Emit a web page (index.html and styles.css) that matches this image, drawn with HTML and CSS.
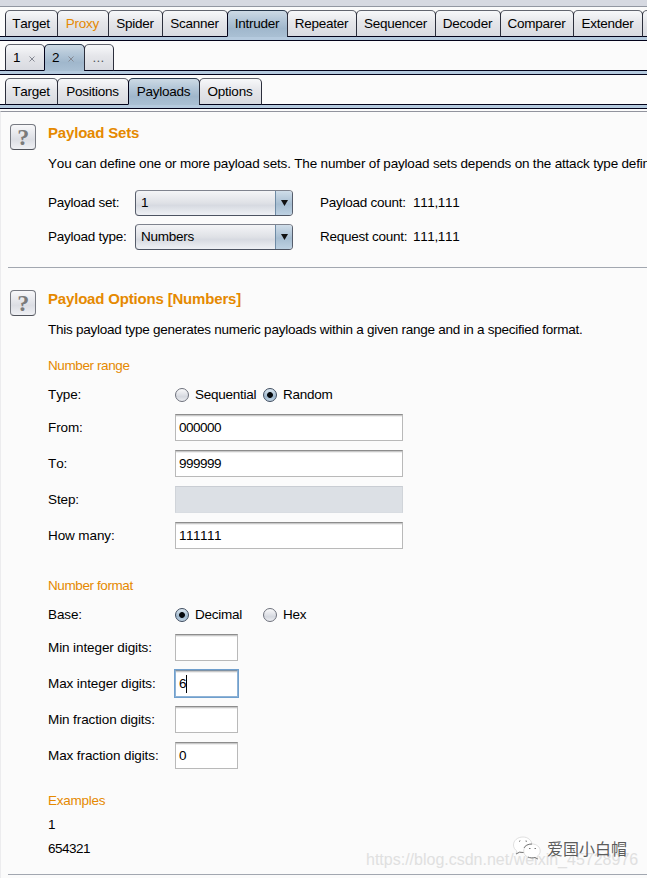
FILE: index.html
```html
<!DOCTYPE html>
<html lang="en">
<head>
<meta charset="utf-8">
<title>Intruder - Payloads</title>
<link rel="stylesheet" href="styles.css">
</head>
<body>
<div class="window">
  <div class="topbar"></div>
  <nav class="strip">
    <span class="tab w53">Target</span><span class="tab w52 orange">Proxy</span><span class="tab w55">Spider</span><span class="tab w66">Scanner</span><span class="tab w61 selected">Intruder</span><span class="tab w70">Repeater</span><span class="tab w80">Sequencer</span><span class="tab w66">Decoder</span><span class="tab w74">Comparer</span><span class="tab w70">Extender</span><span class="tab w70"></span>
  </nav>
  <div class="band"></div>
  <nav class="strip">
    <span class="tab w40 closable">1<svg class="close" viewBox="0 0 6 6"><path d="M.5 .5l5 5M5.5 .5l-5 5"/></svg></span><span class="tab w41 closable selected">2<svg class="close" viewBox="0 0 6 6"><path d="M.5 .5l5 5M5.5 .5l-5 5"/></svg></span><span class="tab w30 dots">...</span>
  </nav>
  <div class="band"></div>
  <nav class="strip">
    <span class="tab w53">Target</span><span class="tab w72">Positions</span><span class="tab w72 selected">Payloads</span><span class="tab w63">Options</span>
  </nav>
  <div class="band"></div>

  <main class="panel">
    <section class="section sets">
      <div class="help"><span>?</span></div>
      <div class="content">
        <h2>Payload Sets</h2>
        <p class="desc wide">You can define one or more payload sets. The number of payload sets depends on the attack type define</p>
        <div class="setrow">
          <label>Payload set:</label>
          <div class="combo"><span class="value">1</span><span class="arrow"><svg viewBox="0 0 7 6"><path d="M0 0h7L3.500 6z"/></svg></span></div>
          <span class="count">Payload count:</span><span class="total">111,111</span>
        </div>
        <div class="setrow">
          <label>Payload type:</label>
          <div class="combo"><span class="value">Numbers</span><span class="arrow"><svg viewBox="0 0 7 6"><path d="M0 0h7L3.500 6z"/></svg></span></div>
          <span class="count">Request count:</span><span class="total">111,111</span>
        </div>
      </div>
    </section>
    <section class="section options">
      <div class="help"><span>?</span></div>
      <div class="content">
        <h2>Payload Options [Numbers]</h2>
        <p class="desc">This payload type generates numeric payloads within a given range and in a specified format.</p>
        <h3 class="range">Number range</h3>
        <div class="row radios"><label>Type:</label><span class="choice"><i class="radio"></i>Sequential</span><span class="choice"><i class="radio on"></i>Random</span></div>
        <div class="row"><label>From:</label><div class="field">000000</div></div>
        <div class="row"><label>To:</label><div class="field">999999</div></div>
        <div class="row"><label>Step:</label><div class="field disabled"></div></div>
        <div class="row"><label>How many:</label><div class="field">111111</div></div>
        <h3 class="format">Number format</h3>
        <div class="row radios"><label>Base:</label><span class="choice"><i class="radio on"></i>Decimal</span><span class="choice"><i class="radio"></i>Hex</span></div>
        <div class="row"><label>Min integer digits:</label><div class="field small"></div></div>
        <div class="row"><label>Max integer digits:</label><div class="field small focus">6<i class="caret"></i></div></div>
        <div class="row"><label>Min fraction digits:</label><div class="field small"></div></div>
        <div class="row"><label>Max fraction digits:</label><div class="field small">0</div></div>
        <h3 class="examples">Examples</h3>
        <div class="example">1</div>
        <div class="example">654321</div>
      </div>
    </section>
  </main>
  <div class="blog">https://blog.csdn.net/weixin_45728976</div>
  <div class="badge">
    <svg class="chat" viewBox="0 0 28 24">
      <path class="bubble" d="M10 1C4.500 1 .5 4.500 .5 9c0 2.500 1.300 4.600 3.300 6L3 18l3.500-1.800c5 1.300 12.500-1 12.500-7.200C19 4.500 15 1 10 1z"/>
      <path class="bubble" d="M19 8c-4.800 0-8.300 3-8.300 7s3.500 7 8.300 7c1 0 2-.2 3-.5l2.800 1.500-.8-2.500c2-1.300 3.200-3.200 3.200-5.500 0-4-3.500-7-8.200-7z"/>
      <path class="shade" d="M3 18l3.500-1.800 4 .3M11 12c1-2.500 4-4 8-4M15 21c2 1 4.500 1.200 7 .5l2.800 1.500"/>
      <path class="shade" d="M6 5.500l1.300-.8M12.500 5l1.500.3M16 12.500h1.500M21.500 12.500H23"/>
    </svg>
    <span>爱国小白帽</span>
  </div>
</div>
</body>
</html>
```
FILE: styles.css
```css
* { box-sizing: border-box; }
body {
  margin: 0;
  background: #fbfbfb;
  color: #000;
  font: 13.5px/20px "Liberation Sans", Arial, "Noto Sans CJK SC", sans-serif;
  font-kerning: none;
  letter-spacing: -.25px;
}
.window {
  position: relative;
  width: 647px;
  height: 878px;
  overflow: hidden;
}
.topbar { height: 7px; background: #d6d9e1; border-bottom: 1px solid #9297a1; }

.strip {
  display: flex;
  height: 30px;
  padding: 3px 0 0 6px;
  border-bottom: 1px solid #02021a;
}
.tab {
  flex: none;
  height: 27px;
  margin-left: -1px;
  padding-right: 1px;
  border: 1px solid;
  border-color: #62656f #2c2f3c #02021a;
  border-radius: 5px 5px 0 0;
  background: linear-gradient(#f7f8fa, #e5e6ea 45%, #d8dae0);
  line-height: 25px;
  text-align: center;
  white-space: nowrap;
}
.tab.selected {
  border-color: #27374a #02021a #a9bfd3;
  background: linear-gradient(#cddae5, #b4c7d8 35%, #a0b7cc 70%, #a9bfd3);
}
.orange { color: #e58900; }
.w30 { width: 30px; } .w40 { width: 40px; } .w41 { width: 41px; }
.w52 { width: 52px; } .w53 { width: 53px; } .w55 { width: 55px; }
.w61 { width: 61px; } .w63 { width: 63px; } .w66 { width: 66px; }
.w70 { width: 70px; } .w72 { width: 72px; } .w74 { width: 74px; }
.w80 { width: 80px; }
.tab.closable { text-align: left; padding-left: 7px; }
.close { width: 6px; height: 6px; margin-left: 9px; stroke: #858993; fill: none; }
.dots { color: #555861; letter-spacing: .3px; }
.band { height: 4px; background: #b5cade; border-bottom: 1px solid #02021a; }

.panel {
  margin-top: 2px;
  height: 800px;
  border-top: 1px solid #92949e;
  border-left: 1px solid #ececee;
}
.section {
  display: flex;
  margin-left: 7px;
  padding-left: 2px;
  border-bottom: 1px solid #a2a7b0;
}
.sets { height: 156px; padding-top: 11px; }
.options { height: 607px; padding-top: 21px; }
.help {
  flex: none;
  width: 26px;
  height: 26px;
  margin: 1px 12px 0 0;
  border: 1px solid #777a82;
  border-bottom-color: #50535b;
  border-radius: 4px;
  background: linear-gradient(#f8f8fa, #dcdee4 60%, #eff0f4);
  color: #7b7b7b;
  font: bold 24px/25px "Liberation Serif", serif;
  text-align: center;
}
.content { flex: 1; min-width: 0; }
h2 { margin: 0; color: #e58900; font-size: 15px; line-height: 20px; white-space: nowrap; letter-spacing: -.18px; }
h3 { margin: 0; color: #e58900; font-size: 13.5px; font-weight: normal; line-height: 20px; letter-spacing: -.4px; }
.desc { margin: 11px 0 0; white-space: nowrap; }
.wide { letter-spacing: -.18px; }
.setrow { display: flex; align-items: center; height: 26px; margin-top: 8px; }
.desc + .setrow { margin-top: 16px; }
.setrow label { width: 87px; }
.combo {
  display: flex;
  width: 158px;
  height: 26px;
  margin-right: 27px;
  border: 1px solid;
  border-color: #7f838e #565d6b #4d5462;
  border-radius: 4px;
  overflow: hidden;
  background: linear-gradient(#f4f5f7, #dfe1e6 50%, #d7dae1 60%, #eff1f5);
}
.value { flex: 1; padding-left: 5px; line-height: 24px; }
.arrow {
  display: flex;
  align-items: center;
  justify-content: center;
  width: 17px;
  border-left: 1px solid #6e8ba5;
  background: linear-gradient(#cfdde9, #a6bdd1 55%, #bdd1e2);
}
.arrow svg { width: 7px; height: 6px; fill: #111; }
.count { width: 93px; }
.total { letter-spacing: -.35px; }
.range { margin-top: 16px; }
.row { display: flex; align-items: center; height: 27px; margin-bottom: 9px; }
.row label { flex: none; width: 127px; letter-spacing: -.1px; }
.row.radios { height: 20px; margin: 9px 0; }
.choice { display: flex; align-items: center; width: 88px; white-space: nowrap; }
.radio {
  flex: none;
  width: 14px;
  height: 14px;
  margin-right: 6px;
  border: 1px solid #6d717c;
  border-radius: 50%;
  background: linear-gradient(#fafafb, #d5d8df 65%, #eceef2);
}
.radio.on {
  border-color: #3e4c5f;
  background: radial-gradient(circle, #05080c 2.5px, transparent 3.3px), linear-gradient(#dce7f0, #9eb7cc 65%, #c2d5e5);
}
.field {
  display: flex;
  align-items: center;
  width: 228px;
  height: 27px;
  padding-left: 3px;
  border: 1px solid #b9b9b9;
  border-top-color: #8d8d8d;
  background: linear-gradient(#c9c9c9 1px, #eee 1px, #eee 2px, #fff 2px);
  letter-spacing: -.5px;
}
.small { width: 63px; }
.disabled { background: #dce0e5; border-color: #c9cdd3 #d0d4d9 #d9dde2; }
.focus { box-shadow: 0 0 0 1px #6f9fcd; border-color: #7f92a5 #8fb3d6 #8fb3d6; }
.caret { width: 1px; height: 18px; background: #000; }
.format { margin-top: 27px; }
.examples { margin-top: 22px; letter-spacing: -.25px; }
.example { height: 20px; margin-top: 4px; letter-spacing: -.5px; }

.blog {
  position: absolute;
  left: 366px;
  top: 850px;
  color: #e0e0e0;
  font-size: 16px;
  line-height: 20px;
  letter-spacing: 0;
  white-space: nowrap;
}
.badge {
  position: absolute;
  left: 513px;
  top: 836px;
  display: flex;
  color: #5c5c5c;
  font: 16px/24px "Noto Sans CJK SC", sans-serif;
  letter-spacing: 0;
  white-space: nowrap;
}
.chat { width: 28px; height: 24px; margin-right: 6px; }
.bubble { fill: #fff; stroke: #d2d2d2; stroke-width: .7; }
.shade { fill: none; stroke: #777; stroke-width: 1; }
```
